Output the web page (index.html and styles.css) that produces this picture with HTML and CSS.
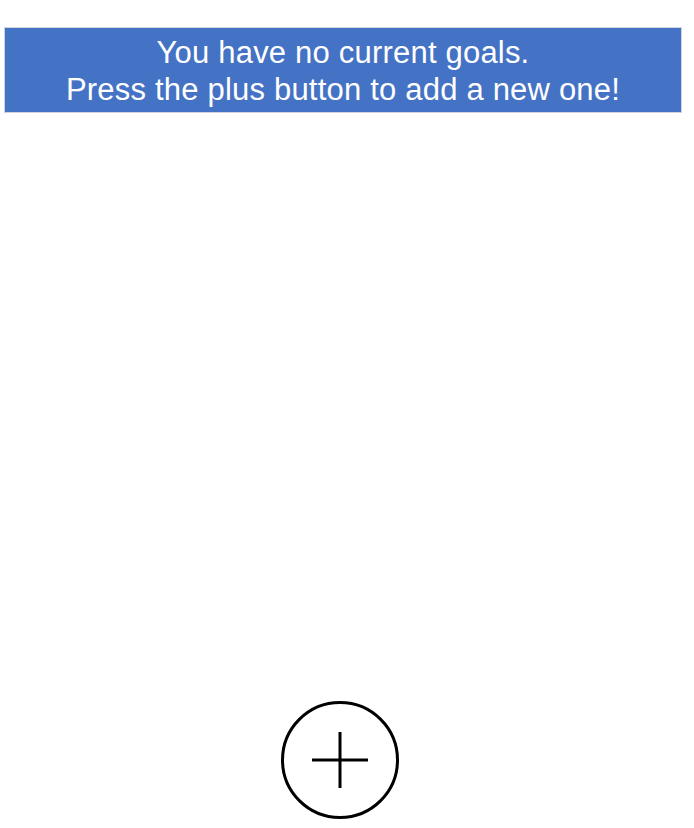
FILE: index.html
```html
<!DOCTYPE html>
<html>
<head>
<meta charset="utf-8">
<link rel="stylesheet" href="styles.css">
</head>
<body>
<div class="page">
  <div class="banner">
    <p class="line">You have no current goals.</p>
    <p class="line">Press the plus button to add a new one!</p>
  </div>
  <div class="spacer"></div>
  <button class="add" aria-label="Add goal">
    <svg width="118" height="118" viewBox="0 0 118 118">
      <circle cx="59" cy="59" r="57.5" fill="none" stroke="#000" stroke-width="3"/>
      <path d="M31 59 H87 M59 31 V87" stroke="#000" stroke-width="3" fill="none"/>
    </svg>
  </button>
</div>
</body>
</html>
```
FILE: styles.css
```css
html, body {
  margin: 0;
  padding: 0;
  background: #fff;
}
.page {
  width: 694px;
  height: 828px;
  display: flex;
  flex-direction: column;
  align-items: flex-start;
  padding-top: 28px;
  box-sizing: border-box;
}
.banner {
  width: 676px;
  height: 84px;
  margin-left: 5px;
  box-sizing: border-box;
  padding-top: 1px;
  background: #4472c4;
  color: #fff;
  font-family: "Liberation Sans", Arial, sans-serif;
  font-size: 31px;
  letter-spacing: 0.2px;
  text-align: center;
  display: flex;
  flex-direction: column;
  justify-content: center;
  box-shadow: 0 0 0 1px rgba(60, 80, 120, 0.25);
}
.line {
  margin: 0;
  line-height: 37px;
}
.spacer {
  flex: 1;
}
.add {
  border: 0;
  background: transparent;
  padding: 0;
  margin: 0 0 9px 281px;
  width: 118px;
  height: 118px;
  display: block;
}
.add svg {
  display: block;
}
```
